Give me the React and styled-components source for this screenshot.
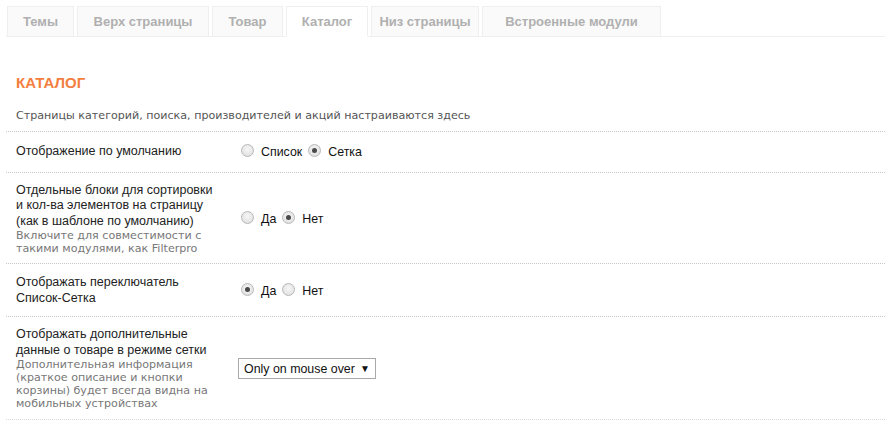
import React from "react";
import styled, { createGlobalStyle } from "styled-components";

const Global = createGlobalStyle`
  html, body { margin: 0; padding: 0; background: #fff; }
  body { font-family: "Liberation Sans", Arial, sans-serif; font-size: 12.5px; color: #222; }
`;

const Page = styled.div`
  width: 893px;
  padding: 6px 8px 0 6px;
  box-sizing: border-box;
`;

const TabBar = styled.div`
  display: flex;
  gap: 3px;
  padding-left: 1px;
  border-bottom: 1px solid #f0f0f0;
  height: 30px;
`;

const Tab = styled.div`
  width: ${(p) => p.$w}px;
  height: ${(p) => (p.$active ? "31px" : "30px")};
  box-sizing: border-box;
  display: flex;
  align-items: center;
  justify-content: center;
  font-weight: bold;
  font-size: 13px;
  color: #b0b0b0;
  background: ${(p) => (p.$active ? "#fff" : "#fafafa")};
  border: 1px solid #efefef;
  border-bottom: ${(p) => (p.$active ? "1px solid #fff" : "none")};
`;

const Content = styled.div`
  padding-top: 37px;
`;

const Heading = styled.h2`
  margin: 0 0 0 10px;
  font-size: 15px;
  font-weight: bold;
  color: #f47e3e;
  line-height: 18px;
`;

const Intro = styled.p`
  margin: 16px 0 0 10px;
  font-family: "DejaVu Sans", Verdana, sans-serif;
  font-size: 11.1px;
  color: #555;
  line-height: 16px;
  padding-bottom: 7px;
`;

const Row = styled.div`
  display: grid;
  grid-template-columns: 224px 1fr;
  align-items: center;
  padding: ${(p) => p.$pt}px 0 ${(p) => p.$pb}px 10px;
  border-top: 1px dotted #c8c8c8;
  &:last-child {
    border-bottom: 1px dotted #d8d8d8;
  }
`;

const Label = styled.div`
  line-height: 15.5px;
  color: #222;
  width: 203px;
`;

const Hint = styled.div`
  font-family: "DejaVu Sans", Verdana, sans-serif;
  font-size: 11.1px;
  color: #777;
  line-height: 13px;
`;

const Controls = styled.div`
  display: flex;
  align-items: center;
  padding-left: 1px;
`;

const Option = styled.label`
  display: flex;
  align-items: center;
  gap: 7px;
  margin-right: 6px;
  font-size: 12.4px;
  color: #111;
`;

const Radio = styled.span`
  width: 13px;
  height: 13px;
  border-radius: 50%;
  box-sizing: border-box;
  border: 1px solid #b8b8b8;
  background: radial-gradient(circle at 50% 40%, #f6f6f6 0%, #dcdcdc 100%);
  display: flex;
  align-items: center;
  justify-content: center;
  position: relative;
  top: -1px;
  &::after {
    content: "";
    width: 5px;
    height: 5px;
    border-radius: 50%;
    background: #4a4a4a;
    display: ${(p) => (p.$on ? "block" : "none")};
  }
`;

const Select = styled.div`
  width: 138px;
  height: 21px;
  box-sizing: border-box;
  border: 1px solid #a9a9a9;
  display: flex;
  align-items: center;
  justify-content: space-between;
  padding: 0 5px 0 5px;
  font-size: 12.4px;
  white-space: nowrap;
  color: #111;
  margin-left: -3px;
`;

const Arrow = styled.span`
  font-size: 10px;
  color: #111;
`;

const tabs = [
  { t: "Темы", w: 67 },
  { t: "Верх страницы", w: 132 },
  { t: "Товар", w: 71 },
  { t: "Каталог", w: 82, active: true },
  { t: "Низ страницы", w: 108 },
  { t: "Встроенные модули", w: 179 },
];

function Radios({ items }) {
  return (
    <Controls>
      {items.map(([l, on]) => (
        <Option key={l}>
          <Radio $on={on} />
          {l}
        </Option>
      ))}
    </Controls>
  );
}

export default function App() {
  return (
    <Page>
      <Global />
      <TabBar>
        {tabs.map((t) => (
          <Tab key={t.t} $active={t.active} $w={t.w}>
            {t.t}
          </Tab>
        ))}
      </TabBar>
      <Content>
        <Heading>КАТАЛОГ</Heading>
        <Intro>Страницы категорий, поиска, производителей и акций настраиваются здесь</Intro>
        <div>
          <Row $pt={12} $pb={12}>
            <Label>Отображение по умолчанию</Label>
            <Radios items={[["Список", false], ["Сетка", true]]} />
          </Row>
          <Row $pt={10} $pb={8}>
            <Label>
              Отдельные блоки для сортировки и кол-ва элементов на страницу (как в шаблоне по умолчанию)
              <Hint>Включите для совместимости с такими модулями, как Filterpro</Hint>
            </Label>
            <Radios items={[["Да", false], ["Нет", true]]} />
          </Row>
          <Row $pt={11} $pb={10}>
            <Label>Отображать переключатель Список-Сетка</Label>
            <Radios items={[["Да", true], ["Нет", false]]} />
          </Row>
          <Row $pt={10} $pb={9}>
            <Label>
              Отображать дополнительные данные о товаре в режиме сетки
              <Hint>Дополнительная информация (краткое описание и кнопки корзины) будет всегда видна на мобильных устройствах</Hint>
            </Label>
            <Controls>
              <Select>
                Only on mouse over
                <Arrow>▼</Arrow>
              </Select>
            </Controls>
          </Row>
        </div>
      </Content>
    </Page>
  );
}
